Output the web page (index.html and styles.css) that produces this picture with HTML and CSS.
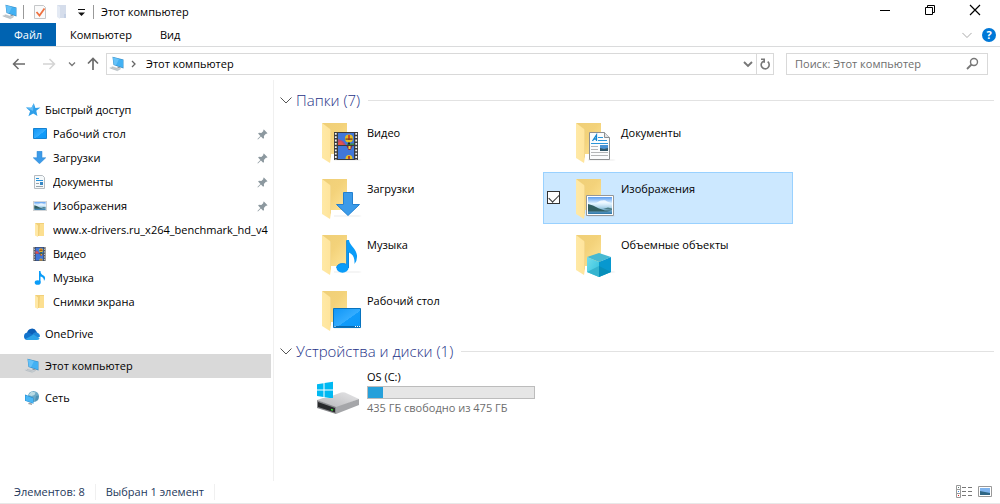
FILE: index.html
```html
<!DOCTYPE html>
<html lang="ru">
<head>
<meta charset="utf-8">
<title>Этот компьютер</title>
<link rel="stylesheet" href="styles.css">
</head>
<body>
<svg class="sprite" aria-hidden="true">
  <defs>
    <linearGradient id="g-back" x1="0" y1="0" x2="1" y2="1"><stop offset="0" stop-color="#efcf78"/><stop offset=".45" stop-color="#f3d27a"/><stop offset="1" stop-color="#ffe599"/></linearGradient>
    <linearGradient id="g-flap" x1="0" y1="0" x2="1" y2="0"><stop offset="0" stop-color="#ffe9a6"/><stop offset="1" stop-color="#ffe49b"/></linearGradient>
    <linearGradient id="g-blue" x1="0" y1="0" x2="1" y2="1"><stop offset="0" stop-color="#0f95f5"/><stop offset=".55" stop-color="#35adff"/><stop offset=".56" stop-color="#119bfa"/><stop offset="1" stop-color="#0b97f8"/></linearGradient>
    <linearGradient id="g-sky" x1="0" y1="0" x2="0" y2="1"><stop offset="0" stop-color="#5c9df0"/><stop offset=".6" stop-color="#e4f4ff"/><stop offset="1" stop-color="#a8cfe8"/></linearGradient>
    <linearGradient id="g-sea" x1="0" y1="0" x2="0" y2="1"><stop offset="0" stop-color="#b4d9ec"/><stop offset="1" stop-color="#2b75a8"/></linearGradient>
    <linearGradient id="g-top" x1="0" y1="1" x2="1" y2="0"><stop offset="0" stop-color="#b5b5b7"/><stop offset="1" stop-color="#e6e6e8"/></linearGradient>
    <linearGradient id="g-cube" x1="0" y1="0" x2="1" y2="1"><stop offset="0" stop-color="#73ddec"/><stop offset="1" stop-color="#2ebfdc"/></linearGradient>
  </defs>
  <symbol id="i-base" viewBox="0 0 48 48">
    <path d="M19 41h25l3 1-3 1H19z" fill="#000" opacity=".04"/>
    <path d="M7 5h25v31H16z" fill="url(#g-back)"/>
    <path d="M7 5l8 6q1 1 1 2v26l-1 6-8-5z" fill="url(#g-flap)"/>
    <path d="M15.500 11.500v28" stroke="#ecd083" stroke-width=".6"/>
  </symbol>
  <symbol id="i-film" viewBox="0 0 24 28">
    <path d="M0 0h24v28H0z" fill="#3b3b3d"/>
    <path d="M1.800 1v27M22.200 1v27" stroke="#f2f2f2" stroke-width="1.800" stroke-dasharray="1.800 1.500"/>
    <path d="M4 1h16v12H4zM4 14h16v13H4z" fill="#4177d9"/>
    <path d="M4 7l5 2 3 4H4z" fill="#b54a77"/><path d="M4 11l3-2 3 4H4z" fill="#e45548"/><path d="M13 11.500h7v1.500h-7z" fill="#3c8d50"/>
    <circle cx="15" cy="6.500" r="4" fill="#e5bd21"/><path d="M14.200 3h1.600v5h-1.600z" fill="#c92c22"/><path d="M11.500 6.500h7v1.200h-7z" fill="#703b21"/><path d="M14 10.500h2v2h-2z" fill="#222"/>
    <path d="M12.500 14h6l-2 4h-2z" fill="#8e2c3c"/><path d="M14.500 14h2v3h-2z" fill="#eed53a"/>
    <path d="M11.500 27q0-4 3.500-4t3.500 4z" fill="#e4c126"/><path d="M14.200 24h1.600v3h-1.600z" fill="#b42a2a"/>
  </symbol>
  <symbol id="i-arrow" viewBox="0 0 24 24"><path d="M7.500.5h9v12h7L12 23.500.5 12.500h7z" fill="#3c9be9" stroke="#2380d0"/></symbol>
  <symbol id="i-note" viewBox="0 0 21 34"><ellipse cx="6.500" cy="28" rx="6" ry="4.700" fill="#0a9cf8"/><path d="M10.500 0H13c.5 6 8.500 9 8 17q0 4-2.500 7 .5-9-5.500-11.500V28h-2.500z" fill="#0a9cf8"/><path d="M12.500 12v16M.5 28q0-4 6-4.500 3 0 4 1V.5" fill="none" stroke="#0780d8" stroke-width=".7"/></symbol>
  <symbol id="i-screen" viewBox="0 0 28 20"><path d="M.5.5h27v19H.5z" fill="url(#g-blue)" stroke="#0873be"/><path d="M1 18.500h26" stroke="#0b69ae"/><path d="M1.500 18.500h1M22 18.500h1m1 0h1m1 0h1" stroke="#fff"/></symbol>
  <symbol id="i-desk" viewBox="0 0 14 11"><path d="M.5.5h13v10H.5z" fill="url(#g-blue)" stroke="#1581d0"/></symbol>
  <symbol id="i-doc" viewBox="0 0 21 28"><path d="M.5.5h15l5 5v22H.5z" fill="#fbfcfd" stroke="#8d8f91"/><path d="M15.500.5v5h5" fill="#dfe2e5" stroke="#8d8f91"/><path d="M3.500 9L7.500 3v6M5 7h3" fill="none" stroke="#1587d0" stroke-width="1.300"/><path d="M9 5.500h5M9 8.500h9M2 11.500h17" stroke="#2c96da"/><path d="M11 13h8v6h-8z" fill="#4a92d2"/><path d="M11 16l4 1 4-1v3h-8z" fill="#31576a"/><path d="M2 14.500h7M2 17.500h7M2 20.500h17M2 23.500h17" stroke="#b4b6b8"/></symbol>
  <symbol id="i-photo" viewBox="0 0 28 21"><path d="M.5.5h27v20H.5z" fill="#fff" stroke="#949799"/><path d="M2 2h24v11H2z" fill="url(#g-sky)"/><path d="M2 12h24v7H2z" fill="url(#g-sea)"/><path d="M12 7q2-2 4-1.500 3-1 5 1l4 1.500H10z" fill="#eef7ff"/><path d="M2 9l5 1.500 6 3 6 2h7l-5 1H2z" fill="#315e61"/><path d="M17 14l5-1.500 4 1v1.500z" fill="#4e7e89"/></symbol>
  <symbol id="i-cube" viewBox="0 0 24 24"><path d="M12 0l12 4-12 5L0 4z" fill="#47b9d2"/><path d="M0 4l12 5v15L0 19z" fill="url(#g-cube)"/><path d="M12 9l12-5v15l-12 5z" fill="#0798cf"/><path d="M0 19l12-6v11z" fill="#35b4cf"/><path d="M12 13l12 6-12 5z" fill="#078fba"/></symbol>
  <symbol id="i-drive" viewBox="0 0 48 48">
    <path d="M2 15.200l6.500-1v6.400H2zM9.500 14l8.500-1.200v7.800H9.500zM2 21.500h6.500V28L2 27zM9.500 21.500H18v7.900l-8.500-1.200z" fill="#00b9f2"/>
    <path d="M2 31l6-2h10v-2.500l8-3q2-.5 4 0l14 6.500-23 9z" fill="url(#g-top)"/>
    <path d="M21 38l23-8v6l-23 9z" fill="#a5a6a9"/>
    <path d="M2 31l19 7v7L2 39z" fill="#88898c"/><path d="M3 33l17 6v4.500L3 38z" fill="#28292b"/><path d="M16 40.500l2 .6" stroke="#42e638" stroke-width="1.500"/>
  </symbol>
  <symbol id="i-pc" viewBox="0 0 16 16"><path d="M3.500.8l11 2.700v9L4.500 9z" fill="#3a8fc8"/><path d="M4 1.400l10 2.500v7.700L5 8.500z" fill="#43b1f3"/><path d="M4 1.400l6 1.500-3 6.300-2-.7z" fill="#66c2f8"/><path d="M8.500 10.500l3 1v1.300l-3-.7z" fill="#8e989f"/><path d="M0 12l3.500-1.700 8.500 2.700-3.500 2.200z" fill="#d0d5d8"/><path d="M1.500 12.200l7 2M3 11.300l7.500 2.200" stroke="#aab2b8" stroke-width=".6"/></symbol>
  <symbol id="i-folder" viewBox="0 0 16 16"><path d="M3 1h9v13H6z" fill="#f1d07a"/><path d="M3 1l3 2.500V15l-3-1.500z" fill="#ffe8a6"/><path d="M8 2h4v12H7z" fill="#fcdf90"/></symbol>
  <symbol id="i-star" viewBox="0 0 16 16"><path d="M8.800 1.200l1.600 4.700 5-.3-4.100 3.100 1.100 5.200-4.200-2.500-4.800 2.800 1.700-4.900L1 5.600l5.400.1z" fill="#2f9fe9"/><path d="M1 5.600l5.400.1 2.400-4.500L8 9z" fill="#62bcf5"/></symbol>
  <symbol id="i-cloud" viewBox="0 0 16 16"><path d="M3 7a5 5 0 0 1 9.500-1.500L14 10H3z" fill="#0b5fb8"/><path d="M0 10.500q0-4 4-4 2 0 8 4.500l-8 3q-4 0-4-3.500z" fill="#1273cc"/><path d="M8 9q2-3.500 5-2.500 3 1 3 4l-3 2z" fill="#1f86d8"/><path d="M1.500 13l8-4.500 6.200 4q-1 1.500-3 1.500H4z" fill="#2ca3e8"/></symbol>
  <symbol id="i-net" viewBox="0 0 16 16"><circle cx="9.500" cy="6.500" r="5.500" fill="#6aa9c6"/><path d="M7.500 1.500l4 1-1 2.500-3 1-3-1z" fill="#b9dbe4"/><path d="M12 6l3-.5-1 4.500-3 1z" fill="#4d91b4"/><path d="M1 4.500l8.500 3.200v6.100L1 10.800z" fill="#258dd2"/><path d="M1.500 5.200l7.500 3v4.800L1.500 10.500z" fill="#4ab7f5"/><path d="M5 12.500l3 1v1.500l-4-1z" fill="#9ca3a8"/></symbol>
  <symbol id="i-pin" viewBox="0 0 12 12"><path d="M7.500.5l4 4-1 .8-.8-.1-2.200 2.300.2 2.300-1 .9-2.400-2.500L1 11.500l-.5-.5 3.200-3.500L1.200 5l1-1 2.500.3L7 2.200l-.2-1z" fill="#8c989f"/></symbol>
  <symbol id="i-dn" viewBox="0 0 12 12"><path d="M.5 3.500L6 9l5.500-5.500" fill="none" stroke="currentColor"/></symbol>
</svg>

<div class="window">
  <header class="titlebar">
    <svg class="icon"><use href="#i-pc"/></svg>
    <span class="tick"></span>
    <button class="quick" aria-label="Свойства"><svg width="16" height="16" viewBox="0 0 16 16"><path d="M2.500 1.500h9l2 2v11h-11z" fill="#fafafa" stroke="#c5c7c9"/><path d="M4.500 8l3 3.500 5-7" fill="none" stroke="#ee7140" stroke-width="1.800"/></svg></button>
    <button class="quick" aria-label="Новая папка"><svg width="16" height="16" viewBox="0 0 16 16"><path d="M4 1h9v13H6z" fill="#d5ddeb"/><path d="M4 1l3 2v12l-3-2z" fill="#e4eaf4"/><path d="M11 10h2v4h-2z" fill="#c4d0e4"/></svg></button>
    <button class="quick" aria-label="Настройка панели"><svg width="16" height="16" viewBox="0 0 16 16"><path d="M4 5.500h7" stroke="#111"/><path d="M4 8.500h7L7.500 12z" fill="#111"/></svg></button>
    <span class="tick tick-last"></span>
    <h1 class="title">Этот компьютер</h1>
    <div class="controls">
      <button class="control" aria-label="Свернуть"><svg width="12" height="12" viewBox="0 0 12 12"><path d="M1 6.500h10" stroke="#000"/></svg></button>
      <button class="control" aria-label="Свернуть в окно"><svg width="12" height="12" viewBox="0 0 12 12"><path d="M1.500 3.500h7v7h-7zM3.500 3.500v-2h7v7h-2" fill="none" stroke="#000"/></svg></button>
      <button class="control" aria-label="Закрыть"><svg width="12" height="12" viewBox="0 0 12 12"><path d="M1 1l10 10M11 1L1 11" stroke="#000" stroke-width="1.200"/></svg></button>
    </div>
  </header>

  <nav class="tabs">
    <button class="tab tab-file">Файл</button>
    <button class="tab">Компьютер</button>
    <button class="tab">Вид</button>
    <span class="tabs-end">
      <button class="plain faint" aria-label="Развернуть ленту"><svg width="10" height="12"><use href="#i-dn"/></svg></button>
      <button class="help" aria-label="Справка">?</button>
    </span>
  </nav>

  <div class="toolbar">
    <button class="plain arrow" aria-label="Назад"><svg width="14" height="14" viewBox="0 0 14 14"><path d="M13 7H1.500M6.500 2l-5 5 5 5" fill="none" stroke="#6b6b6b" stroke-width="1.500"/></svg></button>
    <button class="plain arrow" aria-label="Вперед" disabled><svg width="14" height="14" viewBox="0 0 14 14"><path d="M1 7h11.500M7.500 2l5 5-5 5" fill="none" stroke="#d4d4d4" stroke-width="1.500"/></svg></button>
    <button class="plain recent" aria-label="Последние расположения"><svg width="8" height="8" viewBox="0 0 8 8"><path d="M1 2.500l3 3 3-3" fill="none" stroke="#777" stroke-width="1.300"/></svg></button>
    <button class="plain up" aria-label="Вверх"><svg width="14" height="14" viewBox="0 0 14 14"><path d="M7 13V1.500M2 6.500l5-5 5 5" fill="none" stroke="#6b6b6b" stroke-width="1.700"/></svg></button>
    <div class="address">
      <svg class="icon"><use href="#i-pc"/></svg>
      <svg class="crumb" width="8" height="8" viewBox="0 0 8 8"><path d="M2 1l3 3-3 3" fill="none" stroke="#666" stroke-width="1.300"/></svg>
      <span class="path">Этот компьютер</span>
      <button class="plain" aria-label="Предыдущие адреса"><svg width="12" height="12" viewBox="0 0 12 12"><path d="M2 4l4 4 4-4" fill="none" stroke="#777" stroke-width="1.900"/></svg></button>
      <button class="plain refresh" aria-label="Обновить"><svg width="12" height="12" viewBox="0 0 12 12"><path d="M8.700 3.700A4 4 0 1 1 4.500 3.200M2 1.200h3.200v3.500" fill="none" stroke="#777" stroke-width="1.600"/></svg></button>
    </div>
    <label class="search">
      <input class="search-input" type="text" aria-label="Поиск" placeholder="Поиск: Этот компьютер">
      <svg width="13" height="13" viewBox="0 0 13 13"><circle cx="8" cy="5" r="3.500" fill="none" stroke="#777" stroke-width="1.400"/><path d="M5.500 7.500L1 12" stroke="#777" stroke-width="1.800"/></svg>
    </label>
  </div>

  <div class="body">
    <aside class="nav">
      <a class="link" href="#"><svg class="icon"><use href="#i-star"/></svg><span>Быстрый доступ</span></a>
      <a class="link sub" href="#"><svg class="icon" viewBox="0 0 16 16"><use href="#i-desk" x="1" y="2" width="14" height="11"/></svg><span>Рабочий стол</span><svg class="pin"><use href="#i-pin"/></svg></a>
      <a class="link sub" href="#"><svg class="icon" viewBox="0 0 16 16"><use href="#i-arrow" x="1" y="1" width="13" height="13"/></svg><span>Загрузки</span><svg class="pin"><use href="#i-pin"/></svg></a>
      <a class="link sub" href="#"><svg class="icon" viewBox="0 0 16 16"><path d="M2.500 1.500h8l2 2v11h-10z" fill="#f5f9fb" stroke="#b5bbc0"/><path d="M4 4.500h3M4 6.500h7" stroke="#2691d9"/><path d="M8 8h3v3H8z" fill="#3887c3"/><path d="M4 9.500h3M4 12.500h7" stroke="#9aa3aa"/></svg><span>Документы</span><svg class="pin"><use href="#i-pin"/></svg></a>
      <a class="link sub" href="#"><svg class="icon" viewBox="0 0 16 16"><use href="#i-photo" x="1" y="3" width="14" height="10"/></svg><span>Изображения</span><svg class="pin"><use href="#i-pin"/></svg></a>
      <a class="link sub" href="#"><svg class="icon"><use href="#i-folder"/></svg><span>www.x-drivers.ru_x264_benchmark_hd_v4</span></a>
      <a class="link sub" href="#"><svg class="icon" viewBox="0 0 16 16"><use href="#i-film" x="1" y="1" width="13" height="14"/></svg><span>Видео</span></a>
      <a class="link sub" href="#"><svg class="icon" viewBox="0 0 16 16"><path d="M7 1h1.500q0 3 3 4.500 3 2 .5 5.500 0-4-3.500-4.500V12H7z" fill="#0a9cf8"/><ellipse cx="5.700" cy="12.500" rx="3" ry="2.300" fill="#0a9cf8"/></svg><span>Музыка</span></a>
      <a class="link sub" href="#"><svg class="icon"><use href="#i-folder"/></svg><span>Снимки экрана</span></a>
      <a class="link root" href="#"><svg class="icon"><use href="#i-cloud"/></svg><span>OneDrive</span></a>
      <a class="link root current" href="#"><svg class="icon"><use href="#i-pc"/></svg><span>Этот компьютер</span></a>
      <a class="link root" href="#"><svg class="icon"><use href="#i-net"/></svg><span>Сеть</span></a>
    </aside>

    <main class="content">
      <h2 class="group"><svg width="12" height="12"><use href="#i-dn"/></svg><span>Папки (7)</span></h2>
      <div class="tiles">
        <div class="tile"><svg class="big" viewBox="0 0 48 48"><use href="#i-base"/><use href="#i-film" x="19" y="14" width="24" height="28"/></svg><span>Видео</span></div>
        <div class="tile"><svg class="big" viewBox="0 0 48 48"><use href="#i-base"/><use href="#i-doc" x="20" y="14" width="21" height="28"/></svg><span>Документы</span></div>
        <div class="tile"><svg class="big" viewBox="0 0 48 48"><use href="#i-base"/><use href="#i-arrow" x="21" y="18" width="24" height="24"/></svg><span>Загрузки</span></div>
        <label class="tile selected"><input class="check" type="checkbox" checked><svg class="big" viewBox="0 0 48 48"><use href="#i-base"/><use href="#i-photo" x="17" y="21" width="28" height="21"/></svg><span>Изображения</span></label>
        <div class="tile"><svg class="big" viewBox="0 0 48 48"><use href="#i-base"/><use href="#i-note" x="21" y="10" width="21" height="34"/></svg><span>Музыка</span></div>
        <div class="tile"><svg class="big" viewBox="0 0 48 48"><use href="#i-base"/><use href="#i-cube" x="18" y="23" width="24" height="24"/></svg><span>Объемные объекты</span></div>
        <div class="tile"><svg class="big" viewBox="0 0 48 48"><use href="#i-base"/><use href="#i-screen" x="18" y="22" width="28" height="20"/></svg><span>Рабочий стол</span></div>
      </div>
      <h2 class="group"><svg width="12" height="12"><use href="#i-dn"/></svg><span>Устройства и диски (1)</span></h2>
      <div class="tiles">
        <div class="tile"><svg class="big" viewBox="0 0 48 48"><use href="#i-drive"/></svg>
          <div class="disk"><span>OS (C:)</span><div class="meter"><div class="used" style="width:9%"></div></div><span class="free">435 ГБ свободно из 475 ГБ</span></div>
        </div>
      </div>
    </main>
  </div>

  <footer class="status">
    <span class="stat">Элементов: 8</span>
    <span class="stat">Выбран 1 элемент</span>
    <span class="views">
      <button class="plain" aria-label="Таблица"><svg width="16" height="14" viewBox="0 0 16 14"><path d="M.5.500h4v4h-4zM.5 4.500h4v4h-4zM.5 8.500h4v4h-4z" fill="#fff" stroke="#999"/><path d="M2 2.500h1" stroke="#5b7b71"/><path d="M2 6.500h1" stroke="#3f8fe9"/><path d="M2 10.500h1" stroke="#d22"/><path d="M6 2.500h4m2 0h4M6 6.500h4m2 0h4M6 10.500h4m2 0h4" stroke="#777"/></svg></button>
      <button class="plain" aria-label="Крупные значки"><svg width="14" height="12" viewBox="0 0 14 12"><path d="M.5.5h13v10H.5z" fill="#fff" stroke="#999"/><path d="M2 2h10v7H2z" fill="#7fb4ee"/><path d="M2 5l5 1 5 1v2H2z" fill="#2f6684"/></svg></button>
    </span>
  </footer>
</div>
</body>
</html>
```

FILE: styles.css
```css
* { box-sizing: border-box; }
body {
  margin: 0;
  background: #fff;
  color: #000;
  font: 11px/16px "Open Sans", "Noto Sans", sans-serif;
}
svg { display: block; flex: none; }
button {
  margin: 0;
  padding: 0;
  border: 0;
  background: none;
  color: inherit;
  font: inherit;
}
h1, h2 { margin: 0; font-weight: 400; }
.sprite { position: absolute; width: 0; height: 0; }
.icon { width: 16px; height: 16px; }

.window { display: flex; flex-direction: column; min-height: 100vh; border-bottom: 1px solid #e8e8e8; }

.titlebar { display: flex; align-items: center; height: 23px; padding-left: 2px; }
.tick { width: 1px; height: 14px; margin: 0 8px 0 5px; background: #999; }
.quick { margin-right: 5px; }
.tick-last { margin: 0 7px 0 -2px; }
.title { font-size: 11px; line-height: 16px; }
.controls { display: flex; margin-left: auto; padding-right: 2px; }
.control { display: grid; place-items: center; width: 45px; height: 20px; padding: 0 2px 4px 0; }

.tabs { display: flex; height: 24px; border-bottom: 1px solid #dadbdc; }
.tab { padding: 0 14px; }
.tab-file { width: 56px; background: #0063b1; color: #fff; }
.tabs-end { display: flex; align-items: center; gap: 10px; margin-left: auto; padding-right: 4px; }
.faint { color: #999; }
.help {
  width: 14px;
  height: 14px;
  border-radius: 50%;
  background: #0078d7;
  color: #fff;
  font-weight: 700;
  line-height: 14px;
}

.toolbar { display: flex; align-items: center; height: 33px; padding: 0 12px; }
.arrow { margin-right: 16px; }
.recent { margin: 0 10px 0 -4px; }
.up { margin-right: 6px; }
.address, .search { display: flex; align-items: center; height: 22px; border: 1px solid #d9d9d9; }
.address { flex: 1; padding-left: 2px; }
.crumb { margin: 0 8px 0 5px; }
.path { flex: 1; }
.refresh { display: grid; place-items: center; width: 17px; height: 20px; margin-left: 2px; border-left: 1px solid #d9d9d9; }
.search { width: 202px; margin-left: 12px; padding: 0 8px; }
.search-input { flex: 1; min-width: 0; padding: 0; border: 0; outline: 0; font: inherit; }
.search-input::placeholder { color: #6d6d6d; opacity: 1; }

.body { display: flex; flex: 1; }
.nav { width: 274px; padding: 18px 2px 0 0; border-right: 1px solid #f0f0f0; }
.link {
  display: flex;
  align-items: center;
  gap: 4px;
  height: 24px;
  padding-left: 25px;
  overflow: hidden;
  color: inherit;
  text-decoration: none;
  white-space: nowrap;
}
.link span { overflow: hidden; }
.sub { gap: 5px; padding-left: 32px; }
.root { margin-top: 8px; padding-left: 24px; gap: 5px; }
.current { background: #d9d9d9; }
.pin { width: 11px; height: 11px; margin: 0 3px 0 auto; }

.content { flex: 1; padding: 6px 6px 0; }
.group { display: flex; align-items: center; gap: 4px; height: 30px; padding-bottom: 2px; color: #1e3287; font-size: 15px; font-weight: 300; line-height: 20px; }
.group svg { color: #555; }
.group::after { content: ""; flex: 1; height: 1px; margin-left: 4px; background: #e2e2e2; }
.tiles {
  display: grid;
  grid-template-columns: repeat(2, 250px);
  gap: 4px;
  padding: 0 0 1px 9px;
}
.tile { position: relative; display: flex; gap: 4px; height: 52px; padding: 2px 0 0 26px; }
.tile > span { padding-top: 7px; }
.big { width: 48px; height: 48px; }
.selected::before { content: ""; position: absolute; inset: 0; z-index: -1; border: 1px solid #99d1ff; background: #cce8ff; }
.check {
  position: absolute;
  top: 19px;
  left: 4px;
  width: 13px;
  height: 13px;
  margin: 0;
  border: 1px solid #333;
  background: #fff;
  appearance: none;
}
.check::after {
  content: "";
  position: absolute;
  top: 2px;
  left: 1px;
  width: 9px;
  height: 5px;
  border: solid #333;
  border-width: 0 0 1px 1px;
  transform: rotate(-45deg);
}
.disk { display: flex; flex-direction: column; flex: 1; }
.meter { width: 168px; height: 13px; margin: 1px 0; border: 1px solid #bcbcbc; background: #e6e6e6; }
.used { height: 100%; background: #26a0da; }
.free { color: #6d6d6d; }

.status { display: flex; align-items: center; height: 22px; padding: 0 8px 0 14px; color: #1e395b; }
.stat { margin-right: 10px; padding-right: 10px; border-right: 1px solid #f0f0f0; }
.views { display: flex; align-items: center; gap: 6px; margin-left: auto; }
```
